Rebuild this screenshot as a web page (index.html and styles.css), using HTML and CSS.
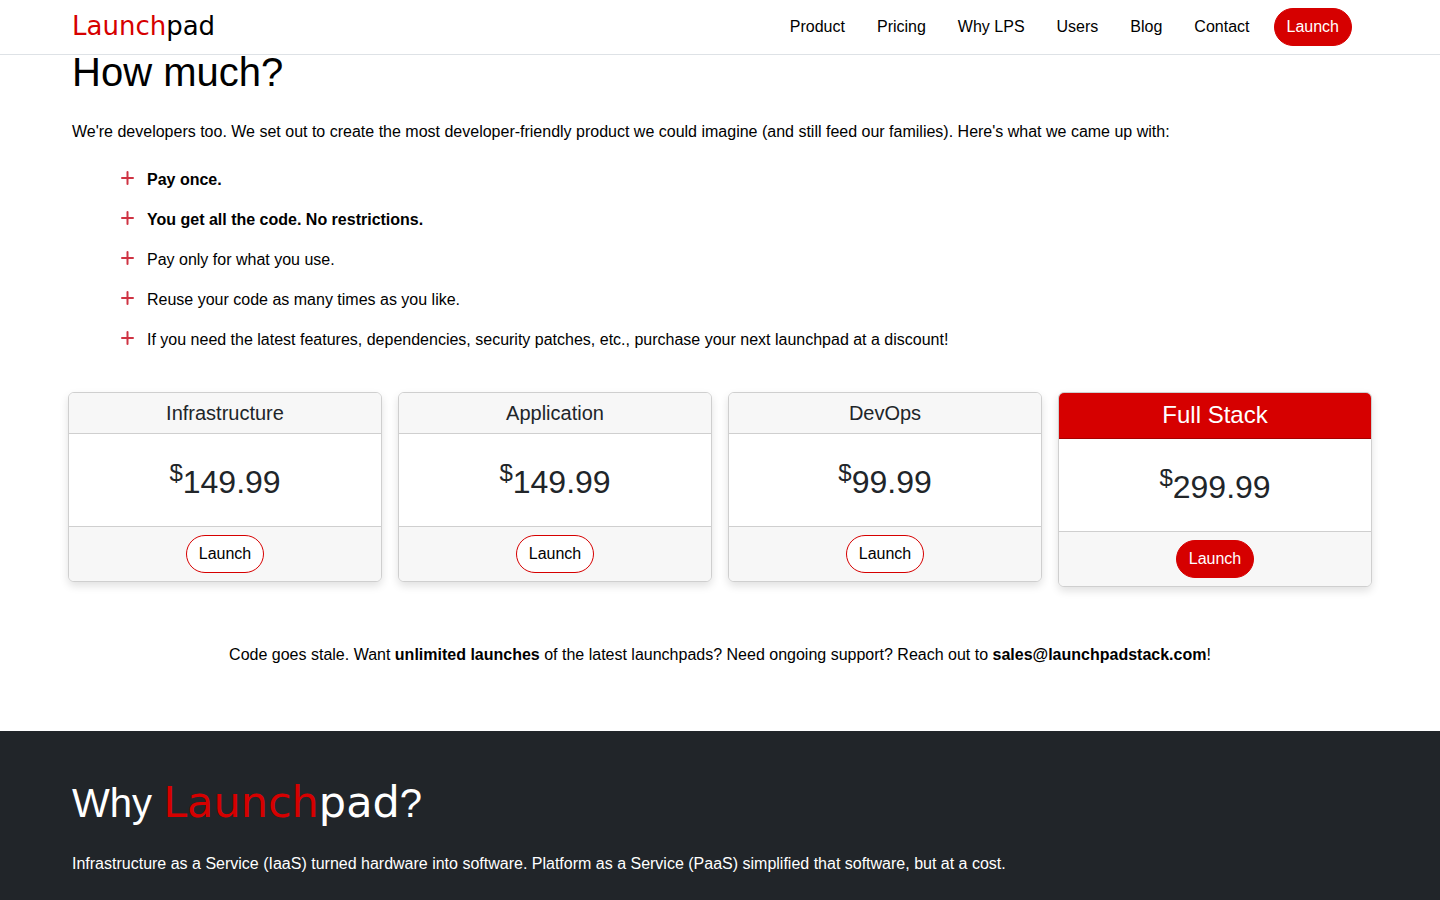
FILE: index.html
```html
<!DOCTYPE html>
<html lang="en">
<head>
<meta charset="utf-8">
<meta name="viewport" content="width=device-width, initial-scale=1">
<title>Launchpad</title>
<link rel="stylesheet" href="styles.css">
</head>
<body>
<header class="navbar">
  <div class="container navbar-inner">
    <a class="brand" href="#top"><span class="brand-red">Launch</span>pad</a>
    <nav class="nav">
      <a class="nav-link" href="#product">Product</a>
      <a class="nav-link" href="#pricing">Pricing</a>
      <a class="nav-link" href="#why">Why LPS</a>
      <a class="nav-link" href="#users">Users</a>
      <a class="nav-link" href="#blog">Blog</a>
      <a class="nav-link" href="#contact">Contact</a>
      <button class="btn btn-solid nav-btn" type="button">Launch</button>
    </nav>
  </div>
</header>
<main>
  <section class="pricing" id="pricing">
    <div class="container">
      <h1 class="title">How much?</h1>
      <p class="text">We're developers too. We set out to create the most developer-friendly product we could imagine (and still feed our families). Here's what we came up with:</p>
      <ul class="perks">
        <li class="perk"><svg class="plus" viewBox="0 0 15 16" aria-hidden="true"><path d="M7.5 2v12M2 8h11"/></svg><strong>Pay once.</strong></li>
        <li class="perk"><svg class="plus" viewBox="0 0 15 16" aria-hidden="true"><path d="M7.5 2v12M2 8h11"/></svg><strong>You get all the code. No restrictions.</strong></li>
        <li class="perk"><svg class="plus" viewBox="0 0 15 16" aria-hidden="true"><path d="M7.5 2v12M2 8h11"/></svg><span>Pay only for what you use.</span></li>
        <li class="perk"><svg class="plus" viewBox="0 0 15 16" aria-hidden="true"><path d="M7.5 2v12M2 8h11"/></svg><span>Reuse your code as many times as you like.</span></li>
        <li class="perk"><svg class="plus" viewBox="0 0 15 16" aria-hidden="true"><path d="M7.5 2v12M2 8h11"/></svg><span>If you need the latest features, dependencies, security patches, etc., purchase your next launchpad at a discount!</span></li>
      </ul>
      <div class="cards">
        <article class="card">
          <h2 class="card-head">Infrastructure</h2>
          <p class="price"><sup class="currency">$</sup>149.99</p>
          <div class="card-foot"><button class="btn" type="button">Launch</button></div>
        </article>
        <article class="card">
          <h2 class="card-head">Application</h2>
          <p class="price"><sup class="currency">$</sup>149.99</p>
          <div class="card-foot"><button class="btn" type="button">Launch</button></div>
        </article>
        <article class="card">
          <h2 class="card-head">DevOps</h2>
          <p class="price"><sup class="currency">$</sup>99.99</p>
          <div class="card-foot"><button class="btn" type="button">Launch</button></div>
        </article>
        <article class="card">
          <h2 class="card-head card-head-full">Full Stack</h2>
          <p class="price"><sup class="currency">$</sup>299.99</p>
          <div class="card-foot"><button class="btn btn-solid" type="button">Launch</button></div>
        </article>
      </div>
      <p class="text note">Code goes stale. Want <strong>unlimited launches</strong> of the latest launchpads? Need ongoing support? Reach out to <a class="mail" href="mailto:sales@launchpadstack.com">sales@launchpadstack.com</a>!</p>
    </div>
  </section>
  <section class="why" id="why">
    <div class="container">
      <h2 class="title">Why <span class="wordmark"><span class="brand-red">Launch</span>pad</span>?</h2>
      <p class="text">Infrastructure as a Service (IaaS) turned hardware into software. Platform as a Service (PaaS) simplified that software, but at a cost.</p>
    </div>
  </section>
</main>
</body>
</html>
```
FILE: styles.css
```css
* { box-sizing: border-box; }

html { scrollbar-width: none; }

body {
  margin: 0;
  background: #fff;
  color: #000;
  font: 16px/24px "Liberation Sans", Arial, sans-serif;
}

.container {
  max-width: 1320px;
  margin: 0 auto;
  padding: 0 12px;
}

.navbar {
  position: fixed;
  top: 0;
  left: 0;
  right: 0;
  z-index: 10;
  background: #fff;
  border-bottom: 1px solid #dee2e6;
}

.navbar-inner,
.nav {
  display: flex;
  align-items: center;
}

.navbar-inner {
  justify-content: space-between;
  min-height: 54px;
}

.brand {
  padding-bottom: 2px;
  color: #000;
  font: 26px/30px "DejaVu Sans", sans-serif;
  text-decoration: none;
}

.brand-red { color: #d60000; }

.nav-link {
  padding: 8px 16px;
  color: #000;
  text-decoration: none;
}

.nav-btn { margin: 0 16px 0 8px; }

.btn {
  padding: 6px 12px;
  border: 1px solid #d60000;
  border-radius: 20px;
  background: #fff;
  color: #000;
  font: inherit;
}

.btn-solid {
  background: #d60000;
  color: #fff;
}

.pricing { padding: 48px 0 64px; }

.title {
  margin: 0 0 24px;
  font-size: 40px;
  font-weight: 400;
  line-height: 48px;
}

.text { margin: 0; }

.perks {
  display: grid;
  gap: 16px;
  margin: 24px 0 40px;
  padding: 0 0 0 48px;
  list-style: none;
}

.perk {
  display: flex;
  gap: 12px;
}

.plus {
  flex: none;
  width: 15px;
  height: 16px;
  margin: 2px 0;
  fill: none;
  stroke: #cf3343;
  stroke-width: 2;
  stroke-linecap: round;
}

.cards {
  display: grid;
  grid-template-columns: repeat(4, 1fr);
  align-items: start;
  gap: 16px;
  margin: 0 -4px;
}

.card {
  overflow: hidden;
  border: 1px solid #cfcfcf;
  border-radius: 6px;
  background: #fff;
  box-shadow: 0 4px 8px rgba(0, 0, 0, 0.12);
  color: #212529;
  text-align: center;
}

.card-head {
  margin: 0;
  padding: 8px 16px;
  border-bottom: 1px solid #cfcfcf;
  background: #f7f7f7;
  font-size: 20px;
  font-weight: 400;
  line-height: 24px;
}

.card-head-full {
  padding-bottom: 9px;
  border-bottom-color: #a60000;
  background: #d60000;
  color: #fff;
  font-size: 24px;
  line-height: 28px;
}

.price {
  margin: 0;
  padding: 29px 16px 25px;
  font-size: 32px;
  line-height: 38px;
}

.currency {
  font-size: 24px;
  line-height: 0;
  vertical-align: 12px;
}

.card-foot {
  padding: 8px 16px;
  border-top: 1px solid #cfcfcf;
  background: #f7f7f7;
}

.note {
  margin-top: 56px;
  text-align: center;
}

.mail {
  color: #000;
  font-weight: 700;
  text-decoration: none;
}

.why {
  padding: 48px 0;
  background: #212529;
  color: #fff;
}

.why .title { margin-bottom: 25px; }

.wordmark {
  font-family: "DejaVu Sans", sans-serif;
  font-size: 43px;
  line-height: 1;
}
```
